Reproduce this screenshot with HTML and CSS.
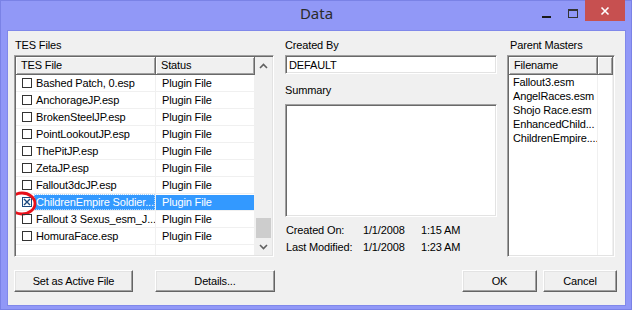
FILE: index.html
```html
<!DOCTYPE html>
<html lang="en">
<head>
  <meta charset="UTF-8">
  <title>Data</title>
  <link rel="stylesheet" href="styles.css">
</head>
<body>
  <div class="window">
    <div class="titlebar">
      <span></span>
      <span class="title">Data</span>
      <div class="controls">
        <span class="ctl-min"></span>
        <span class="ctl-max"></span>
        <span class="ctl-close">
          <svg width="10" height="10" viewBox="0 0 10 10"><path d="M1.5 1.5 L8.5 8.5 M8.5 1.5 L1.5 8.5" stroke="#fff" stroke-width="1.6"/></svg>
        </span>
      </div>
    </div>

    <div class="client">
      <div class="panels">
        <!-- left: plugin list -->
        <section class="panel-files">
          <div class="label">TES Files</div>
          <div class="listview files">
            <div class="lv-main">
              <div class="lv-head">
                <div class="hd c-file">TES File</div>
                <div class="hd c-status">Status</div>
              </div>
              <div class="lv-row"><div class="cell c-file"><span class="chk"></span><span class="txt">Bashed Patch, 0.esp</span></div><div class="cell c-status">Plugin File</div></div>
              <div class="lv-row"><div class="cell c-file"><span class="chk"></span><span class="txt">AnchorageJP.esp</span></div><div class="cell c-status">Plugin File</div></div>
              <div class="lv-row"><div class="cell c-file"><span class="chk"></span><span class="txt">BrokenSteelJP.esp</span></div><div class="cell c-status">Plugin File</div></div>
              <div class="lv-row"><div class="cell c-file"><span class="chk"></span><span class="txt">PointLookoutJP.esp</span></div><div class="cell c-status">Plugin File</div></div>
              <div class="lv-row"><div class="cell c-file"><span class="chk"></span><span class="txt">ThePitJP.esp</span></div><div class="cell c-status">Plugin File</div></div>
              <div class="lv-row"><div class="cell c-file"><span class="chk"></span><span class="txt">ZetaJP.esp</span></div><div class="cell c-status">Plugin File</div></div>
              <div class="lv-row"><div class="cell c-file"><span class="chk"></span><span class="txt">Fallout3dcJP.esp</span></div><div class="cell c-status">Plugin File</div></div>
              <div class="lv-row selected">
                <div class="cell c-file">
                  <span class="chk checked">
                    <svg width="10" height="10" viewBox="0 0 10 10"><rect x="0.5" y="0.5" width="9" height="9" fill="none" stroke="#1c4a80"/><path d="M2 2 L8 8 M8 2 L2 8" stroke="#1c4a80" stroke-width="1.4"/></svg>
                  </span>
                  <span class="txt">ChildrenEmpire Soldier...</span>
                </div>
                <div class="cell c-status">Plugin File</div>
                <svg class="mark" width="32" height="28" viewBox="0 0 32 28"><ellipse cx="15" cy="13.5" rx="13" ry="10.5" fill="none" stroke="#e8101a" stroke-width="2.8"/></svg>
              </div>
              <div class="lv-row"><div class="cell c-file"><span class="chk"></span><span class="txt">Fallout 3 Sexus_esm_J...</span></div><div class="cell c-status">Plugin File</div></div>
              <div class="lv-row"><div class="cell c-file"><span class="chk"></span><span class="txt">HomuraFace.esp</span></div><div class="cell c-status">Plugin File</div></div>
              <div class="lv-row"><div class="cell c-file"></div><div class="cell c-status"></div></div>
            </div>
            <div class="vscroll">
              <div class="sb-btn">
                <svg width="9" height="6" viewBox="0 0 9 6"><path d="M1 5 L4.5 1.5 L8 5" fill="none" stroke="#606060" stroke-width="1.6"/></svg>
              </div>
              <div class="sb-track"><div class="sb-thumb"></div></div>
              <div class="sb-btn">
                <svg width="9" height="6" viewBox="0 0 9 6"><path d="M1 1 L4.5 4.5 L8 1" fill="none" stroke="#606060" stroke-width="1.6"/></svg>
              </div>
            </div>
          </div>
        </section>

        <!-- middle: file info -->
        <section class="panel-info">
          <div class="label">Created By</div>
          <input class="field" value="DEFAULT">
          <div class="label summary-label">Summary</div>
          <textarea class="summary"></textarea>
          <div class="dates">
            <span>Created On:</span><span>1/1/2008</span><span>1:15 AM</span>
            <span>Last Modified:</span><span>1/1/2008</span><span>1:23 AM</span>
          </div>
        </section>

        <!-- right: masters -->
        <section class="panel-masters">
          <div class="label">Parent Masters</div>
          <div class="listview masters">
            <div class="lv-main">
              <div class="lv-head">
                <div class="hd c-name">Filename</div>
                <div class="hd c-rest"></div>
              </div>
              <div class="m-row"><div class="cell c-name">Fallout3.esm</div><div class="cell c-rest"></div></div>
              <div class="m-row"><div class="cell c-name">AngelRaces.esm</div><div class="cell c-rest"></div></div>
              <div class="m-row"><div class="cell c-name">Shojo Race.esm</div><div class="cell c-rest"></div></div>
              <div class="m-row"><div class="cell c-name">EnhancedChild...</div><div class="cell c-rest"></div></div>
              <div class="m-row"><div class="cell c-name">ChildrenEmpire....</div><div class="cell c-rest"></div></div>
              <div class="m-row fill"><div class="cell c-name"></div><div class="cell c-rest"></div></div>
            </div>
          </div>
        </section>
      </div>

      <div class="buttons">
        <button class="btn w-active">Set as Active File</button>
        <button class="btn w-details">Details...</button>
        <button class="btn w-ok">OK</button>
        <button class="btn w-cancel">Cancel</button>
      </div>
    </div>
  </div>
</body>
</html>
```

FILE: styles.css
```css
* { box-sizing: border-box; }
body { margin: 0; width: 632px; height: 310px; overflow: hidden; background: #9198f7; font-family: "Liberation Sans", Arial, sans-serif; font-size: 11px; color: #000; }

.window { height: 310px; border: 1px solid #7a82e6; padding: 0 5px 3px 6px; display: flex; flex-direction: column; }
.titlebar { height: 29px; display: grid; grid-template-columns: 1fr auto 1fr; align-items: center; }
.title { font-family: "Noto Sans", "Open Sans", sans-serif; font-size: 15px; color: #2b2b2b; margin-top: -5px; }
.controls { justify-self: end; align-self: start; display: flex; align-items: flex-start; margin-top: -1px; margin-right: 1px; }
.ctl-min { width: 9px; height: 2px; background: #1a1a1a; margin: 16px 17px 0 0; }
.ctl-max { width: 10px; height: 9px; border: 1px solid #333; border-top-width: 2px; margin: 9px 7px 0 0; }
.ctl-close { width: 40px; height: 21px; background: #c75050; display: flex; align-items: center; justify-content: center; }

.client { flex: 1; background: #f0f0f0; border: 1px solid #8088ea; padding: 8px 0 0 6px; letter-spacing: -0.15px; }
.panels { display: flex; height: 218px; }
.label { line-height: 13px; height: 13px; margin-bottom: 3px; }

/* sunken 3d frame */
.listview, .field, .summary { border: 1px solid; border-color: #a0a0a0 #fff #fff #a0a0a0; box-shadow: inset 1px 1px #696969, inset -1px -1px #e3e3e3; background: #fff; }
.listview { display: flex; padding: 1px; overflow: hidden; }
.lv-main { flex: 1; overflow: hidden; background: #fff; }
.lv-head { display: flex; height: 18px; }
.hd { background: #f0f0f0; border-right: 1px solid #696969; border-bottom: 1px solid #696969; box-shadow: inset 1px 1px #fff, inset -1px -1px #a0a0a0; padding-left: 5px; line-height: 17px; }

.panel-files { width: 260px; margin-right: 11px; }
.panel-files .label { padding-left: 1px; }
.files { height: 202px; }
.c-file { width: 140px; }
.c-status { width: 99px; }
.lv-row { display: flex; height: 17px; position: relative; }
.cell { border-right: 1px solid #f0f0f0; border-bottom: 1px solid #f0f0f0; line-height: 16px; white-space: nowrap; overflow: hidden; }
.lv-row .c-file { display: flex; align-items: center; }
.lv-row .c-status { padding-left: 6px; }
.chk { width: 10px; height: 10px; border: 1px solid #333; margin: 0 2px 0 6px; flex: none; }
.chk.checked { border: none; display: flex; }
.txt { padding-left: 2px; flex: 1; line-height: 16px; }
.selected .txt, .selected .c-status { background: #3399ff; color: #fff; border-top: 1px solid #fff; line-height: 15px; }
.selected .txt { outline: 1px dotted #a6d2ff; outline-offset: -1px; }
.mark { position: absolute; left: -9px; top: -4px; }

.vscroll { width: 17px; background: #f0f0f0; display: flex; flex-direction: column; }
.sb-btn { height: 17px; display: flex; align-items: center; justify-content: center; }
.sb-track { flex: 1; }
.sb-thumb { margin: 144px 1px 0 1px; height: 20px; background: #cdcdcd; }

.panel-info { width: 212px; margin-right: 10px; display: flex; flex-direction: column; }
.field { height: 19px; width: 212px; font: inherit; letter-spacing: inherit; padding: 0 0 0 3px; margin: 0; outline: none; }
.summary-label { margin-top: 10px; margin-bottom: 7px; }
.summary { height: 113px; width: 212px; resize: none; margin: 0; font: inherit; }
.dates { display: grid; grid-template-columns: 77px 58px auto; line-height: 17px; margin-top: 5px; padding-left: 1px; }

.panel-masters { width: 108px; }
.panel-masters .label { padding-left: 3px; }
.masters { height: 202px; }
.c-name { width: 89px; }
.c-rest { flex: 1; }
.m-row { display: flex; height: 14px; }
.m-row .cell { line-height: 14px; border-bottom: none; padding-left: 4px; }
.m-row.fill { height: 200px; }

.buttons { display: flex; margin-top: 13px; }
.btn { height: 22px; font: inherit; letter-spacing: inherit; color: #000; background: #f0f0f0; border: 1px solid; border-color: #fff #646464 #646464 #fff; box-shadow: inset -1px -1px #a0a0a0, inset 1px 1px #e3e3e3; padding: 0; }
.w-active { width: 119px; }
.w-details { width: 120px; margin-left: 22px; }
.w-ok { width: 75px; margin-left: auto; }
.w-cancel { width: 74px; margin-left: 6px; margin-right: 8px; }
```
